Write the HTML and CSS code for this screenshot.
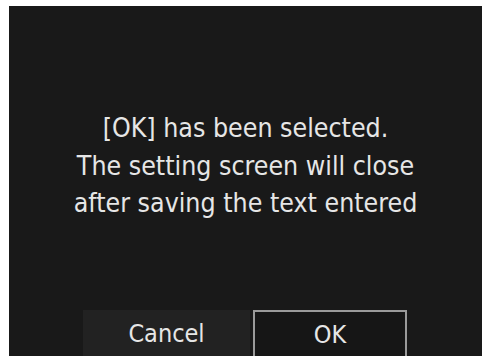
FILE: index.html
```html
<!DOCTYPE html>
<html>
<head>
<meta charset="utf-8">
<link rel="stylesheet" href="styles.css">
</head>
<body>
<div class="screen">
  <div class="message">
    <p>[OK] has been selected.</p>
    <p>The setting screen will close</p>
    <p>after saving the text entered</p>
  </div>
  <div class="actions">
    <div class="btn cancel">Cancel</div>
    <div class="btn ok">OK</div>
  </div>
</div>
</body>
</html>
```

FILE: styles.css
```css
html, body {
  margin: 0;
  padding: 0;
  background: #ffffff;
}
body {
  width: 484px;
  height: 359px;
  overflow: hidden;
}
.screen {
  margin: 6px 0 0 9px;
  width: 473px;
  height: 350px;
  background: #191919;
  display: flex;
  flex-direction: column;
  font-family: "DejaVu Sans Condensed", "DejaVu Sans", sans-serif;
  font-stretch: condensed;
  color: #e6e6e6;
}
.message {
  padding-top: 103px;
  text-align: center;
  font-size: 26.5px;
  line-height: 37.5px;
  flex: 1;
}
.message p {
  margin: 0;
}
.actions {
  display: flex;
  padding-left: 74px;
  gap: 3px;
  height: 46px;
}
.btn {
  display: flex;
  align-items: center;
  justify-content: center;
  font-size: 25px;
  box-sizing: border-box;
}
.cancel {
  width: 167px;
  background: #222222;
}
.ok {
  width: 154px;
  border: 2px solid #9a9a9a;
  border-bottom: none;
  background: #161616;
}
```
